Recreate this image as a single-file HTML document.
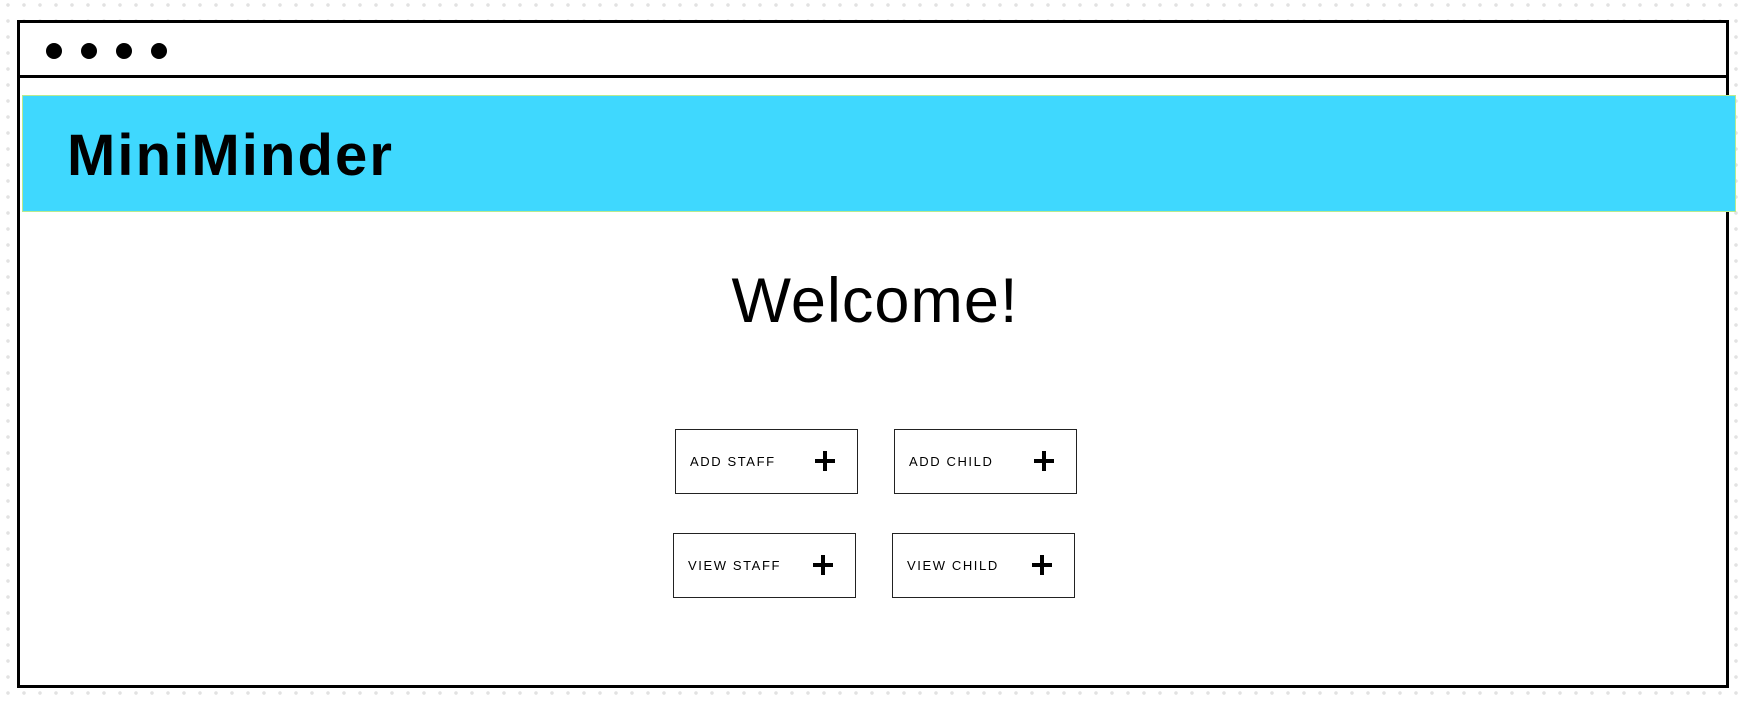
<!DOCTYPE html>
<html><head><style>
body{margin:0;width:1750px;height:706px;overflow:hidden;font-family:"Liberation Sans",sans-serif;
background-color:#fff;background-image:radial-gradient(circle,#e2e2e2 1.6px,transparent 2px);background-size:16px 16px;background-position:0 -3px;}
.frame{position:absolute;left:17px;top:20px;width:1712px;height:668px;border:3.5px solid #000;background:#fff;box-sizing:border-box;}
.bar{position:absolute;left:0;top:0;right:0;height:52px;border-bottom:3.5px solid #000;}
.dot{position:absolute;top:20px;width:16px;height:16px;border-radius:50%;background:#000;}
.band{position:absolute;left:22px;top:95px;width:1714px;height:117px;background:#3fd8fe;border:1px solid #b8ea8f;box-sizing:border-box;}
.logo{position:absolute;left:44px;top:26px;font-size:58px;font-weight:bold;letter-spacing:2.1px;}
.welcome{position:absolute;left:0;width:1750px;top:265px;text-align:center;font-size:63px;letter-spacing:1px;}
.btn{position:absolute;width:183px;height:65px;border:1px solid #222;box-sizing:border-box;background:#fff;}
.btn span{position:absolute;left:14px;top:24px;font-size:13px;letter-spacing:1.6px;}
.btn b{position:absolute;right:22px;top:21px;width:20px;height:20px;}
.btn b:before{content:"";position:absolute;left:0;top:8px;width:20px;height:4px;background:#000}
.btn b:after{content:"";position:absolute;left:8px;top:0;width:4px;height:20px;background:#000}
</style></head><body>
<div class="frame"><div class="bar">
<div class="dot" style="left:26px"></div><div class="dot" style="left:61px"></div><div class="dot" style="left:96px"></div><div class="dot" style="left:131px"></div>
</div></div>
<div class="band"><div class="logo">MiniMinder</div></div>
<div class="welcome">Welcome!</div>
<div class="btn" style="left:675px;top:429px"><span>ADD STAFF</span><b></b></div>
<div class="btn" style="left:894px;top:429px"><span>ADD CHILD</span><b></b></div>
<div class="btn" style="left:673px;top:533px"><span>VIEW STAFF</span><b></b></div>
<div class="btn" style="left:892px;top:533px"><span>VIEW CHILD</span><b></b></div>
</body></html>
